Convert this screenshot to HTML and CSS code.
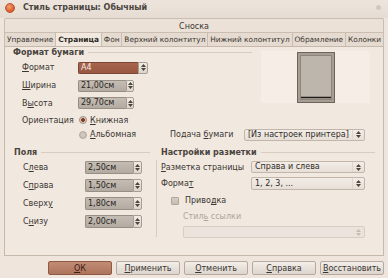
FILE: index.html
```html
<!DOCTYPE html>
<html lang="ru">
<head>
<meta charset="utf-8">
<link rel="stylesheet" href="styles.css">
</head>
<body>
<div class="win">
  <div class="titlebar">
    <span class="close"></span>
    <span class="title">Стиль страницы: Обычный</span>
    <span class="dot"></span>
  </div>
  <div class="notebook">
    <div class="tabs1"><span>Сноска</span></div>
    <div class="tabs2">
      <span class="tab">Управление</span>
      <span class="tab active">Страница</span>
      <span class="tab">Фон</span>
      <span class="tab">Верхний колонтитул</span>
      <span class="tab">Нижний колонтитул</span>
      <span class="tab">Обрамление</span>
      <span class="tab">Колонки</span>
    </div>
    <div class="page">
      <div class="top">
        <div class="paper">
          <div class="hdr"><span>Формат бумаги</span><i class="rule"></i></div>
          <div class="row h19"><span class="lbl"><u>Ф</u>ормат</span>
            <div class="field w70"><span class="val sel">A4</span><span class="spin"><svg width="5" height="7" viewBox="0 0 5 7"><path d="M0 3L2.5 0L5 3Z M0 4L2.5 7L5 4Z"/></svg></span></div>
          </div>
          <div class="row h17"><span class="lbl"><u>Ш</u>ирина</span>
            <div class="field w56"><span class="val">21,00см</span><span class="spin"><svg width="5" height="7" viewBox="0 0 5 7"><path d="M0 3L2.5 0L5 3Z M0 4L2.5 7L5 4Z"/></svg></span></div>
          </div>
          <div class="row h18"><span class="lbl">В<u>ы</u>сота</span>
            <div class="field w56"><span class="val">29,70см</span><span class="spin"><svg width="5" height="7" viewBox="0 0 5 7"><path d="M0 3L2.5 0L5 3Z M0 4L2.5 7L5 4Z"/></svg></span></div>
          </div>
        </div>
        <div class="preview">
          <svg width="38" height="51" viewBox="0 0 38 51">
            <rect x="0.5" y="0.5" width="37" height="50" fill="#a69e93" stroke="#6c655c"/>
            <rect x="3.5" y="3.5" width="31" height="44" fill="#bdb6ac" stroke="#8d857b"/>
            <line x1="4" y1="45.5" x2="34" y2="45.5" stroke="#1e1b18" stroke-width="1.5"/>
          </svg>
        </div>
      </div>
      <div class="orow o1">
        <span class="lbl">Ориентация</span>
        <span class="radio on"></span><span class="rtext"><u>К</u>нижная</span>
      </div>
      <div class="orow o2">
        <span class="lbl"></span>
        <span class="radio"></span><span class="rtext wide"><u>А</u>льбомная</span>
        <span class="lbl2">Подача <u>б</u>умаги</span>
        <div class="select w121"><span class="stext">[Из настроек принтера]</span><span class="sarrow"><svg width="5" height="7" viewBox="0 0 5 7"><path d="M0 3L2.5 0L5 3Z M0 4L2.5 7L5 4Z"/></svg></span></div>
      </div>
      <div class="bottom">
        <div class="margins">
          <div class="hdr"><span>Поля</span><i class="rule"></i></div>
          <div class="mrow"><span class="mlbl">С<u>л</u>ева</span>
            <div class="field w57"><span class="val">2,50см</span><span class="spin s9"><svg width="5" height="7" viewBox="0 0 5 7"><path d="M0 3L2.5 0L5 3Z M0 4L2.5 7L5 4Z"/></svg></span></div></div>
          <div class="mrow"><span class="mlbl">С<u>п</u>рава</span>
            <div class="field w57"><span class="val">1,50см</span><span class="spin s9"><svg width="5" height="7" viewBox="0 0 5 7"><path d="M0 3L2.5 0L5 3Z M0 4L2.5 7L5 4Z"/></svg></span></div></div>
          <div class="mrow"><span class="mlbl">Сверх<u>у</u></span>
            <div class="field w57"><span class="val">1,80см</span><span class="spin s9"><svg width="5" height="7" viewBox="0 0 5 7"><path d="M0 3L2.5 0L5 3Z M0 4L2.5 7L5 4Z"/></svg></span></div></div>
          <div class="mrow"><span class="mlbl">С<u>н</u>изу</span>
            <div class="field w57"><span class="val">2,00см</span><span class="spin s9"><svg width="5" height="7" viewBox="0 0 5 7"><path d="M0 3L2.5 0L5 3Z M0 4L2.5 7L5 4Z"/></svg></span></div></div>
        </div>
        <i class="vsep"></i>
        <div class="layout">
          <div class="hdr"><span>Настройки разметки</span><i class="rule"></i></div>
          <div class="lrow r18"><span class="llbl"><u>Р</u>азметка страницы</span>
            <div class="select w114"><span class="stext">Справа и слева</span><span class="sarrow"><svg width="5" height="7" viewBox="0 0 5 7"><path d="M0 3L2.5 0L5 3Z M0 4L2.5 7L5 4Z"/></svg></span></div></div>
          <div class="lrow r14"><span class="llbl">Форма<u>т</u></span>
            <div class="select w114 h13"><span class="stext">1, 2, 3, ...</span><span class="sarrow"><svg width="5" height="7" viewBox="0 0 5 7"><path d="M0 3L2.5 0L5 3Z M0 4L2.5 7L5 4Z"/></svg></span></div></div>
          <div class="crow"><span class="check"></span><span>Приво<u>д</u>ка</span></div>
          <div class="dlbl">Стил<u>ь</u> ссылки</div>
          <div class="select dis"><span class="stext"></span><span class="sarrow"><svg width="5" height="7" viewBox="0 0 5 7"><path d="M0 3L2.5 0L5 3Z M0 4L2.5 7L5 4Z"/></svg></span></div>
        </div>
      </div>
    </div>
  </div>
  <div class="buttons">
    <span class="btn ok"><u>О</u>К</span>
    <span class="btn"><u>П</u>рименить</span>
    <span class="btn"><u>О</u>тменить</span>
    <span class="btn"><u>С</u>правка</span>
    <span class="btn"><u>В</u>осстановить</span>
  </div>
</div>
</body>
</html>
```

FILE: styles.css
```css
* { box-sizing: border-box; }
html, body { margin: 0; padding: 0; }
body {
  width: 388px; height: 278px; overflow: hidden;
  background: #efe5dc;
  font-family: "DejaVu Sans", sans-serif;
  font-size: 8px;
  color: #3a3632;
}
u { text-decoration: underline; text-underline-offset: 1px; }
.win { width: 388px; height: 278px; display: flex; flex-direction: column; }

.titlebar {
  height: 18px; display: flex; align-items: center;
  padding-left: 5px; padding-right: 7px;
  background: linear-gradient(#ede5dd, #e6dcd2);
}
.close {
  width: 10px; height: 10px; border-radius: 50%;
  background: radial-gradient(circle at 40% 35%, #f5a07a, #e0622f 60%, #c24d22);
  border: 1px solid #b9542c;
  margin-top: -3px;
}
.title { margin-left: 8px; font-weight: bold; color: #4a443e; font-size: 8px; margin-top: -4px; }
.dot { margin-left: auto; width: 5px; height: 5px; border-radius: 50%; background: #d2c9c0; margin-top: -4px; }

.notebook { margin: 0 4px; display: flex; flex-direction: column; }
.tabs1 {
  height: 14px; border: 1px solid #cbbeb1; border-bottom: none;
  background: #ebe1d7; display: flex; justify-content: center; align-items: center;
  padding-top: 1px; border-radius: 2px 2px 0 0;
}
.tabs2 { height: 14px; display: flex; font-size: 7.4px; }
.tab {
  flex: 1 1 auto; text-align: center; padding: 2px 0 0;
  background: #e6dbd0; border: 1px solid #cbbeb1; border-bottom: none; border-left: none;
  line-height: 10px; white-space: nowrap;
}
.tab:first-child { border-left: 1px solid #cbbeb1; }
.tab.active { background: #f1e8df; font-weight: bold; color: #2e2a26; }

.page {
  height: 210px; border: 1px solid #c6b8ab; background: #f1e8df;
  display: flex; flex-direction: column;
}
.hdr { height: 11px; display: flex; align-items: center; font-weight: bold; color: #4a443e; }
.rule { flex: 1; height: 1px; background: #d9cdc1; margin-left: 4px; }

.top { display: flex; padding-left: 8px; }
.paper { width: 239px; display: flex; flex-direction: column; }
.row { display: flex; align-items: center; padding-left: 9px; }
.h19 { height: 19px; } .h17 { height: 17px; } .h18 { height: 18px; }
.lbl { width: 56px; flex: none; }

.field { display: flex; height: 12px; flex: none; }
.w70 { width: 70px; } .w56 { width: 56px; } .w57 { width: 57px; height: 13px; }
.val {
  flex: 1; background: linear-gradient(#c5bdb3, #b3aba1);
  border: 1px solid #978e84; border-right: none;
  padding-left: 2px; line-height: 10px; color: #2a2724; border-radius: 2px 0 0 2px;
}
.w57 .val { line-height: 11px; }
.val.sel { background: linear-gradient(#a8644c, #985741); border-color: #7e4634; color: #f6eee8; }
.spin {
  width: 10px; flex: none; background: linear-gradient(#f1ebe5, #ddd4cb);
  border: 1px solid #a79d93; border-radius: 0 2px 2px 0;
  display: flex; align-items: center; justify-content: center;
}
.w56 .spin { width: 8px; }
.s9 { width: 9px; }
.spin svg, .sarrow svg { fill: #4c4640; display: block; }

.preview {
  margin: 4px 0 0 9px; width: 109px; height: 52px; background: #f5ede6;
  display: flex; justify-content: center; align-items: flex-end;
}

.orow { display: flex; align-items: center; padding-left: 17px; }
.o1 { height: 16px; }
.o2 { height: 13px; }
.radio {
  width: 8px; height: 8px; border-radius: 50%; margin-left: 1px; flex: none;
  background: radial-gradient(#d5ccc3, #c2b8ae); border: 1px solid #b3a89e;
}
.radio.on { background: radial-gradient(circle, #8a3c22 0 1.6px, #d9cfc6 2.2px); border-color: #9b8f84; }
.rtext { margin-left: 3px; }
.rtext.wide { width: 80px; }
.lbl2 { width: 74px; flex: none; }

.select {
  display: flex; height: 12px; border: 1px solid #c2b6aa; border-radius: 2px;
  background: linear-gradient(#f3ede7, #e7dfd7); flex: none;
}
.w121 { width: 121px; } .w114 { width: 114px; }
.h13 { height: 13px; }
.stext { flex: 1; padding-left: 3px; line-height: 10px; white-space: nowrap; color: #2f2b27; }
.h13 .stext { line-height: 11px; }
.sarrow { width: 12px; display: flex; align-items: center; justify-content: center; border-left: 1px solid #e0d6cc; }

.bottom { display: flex; padding-top: 6px; }
.margins { margin-left: 9px; width: 136px; display: flex; flex-direction: column; }
.mrow { height: 18px; display: flex; align-items: center; padding-left: 9px; }
.mlbl { width: 62px; flex: none; }
.vsep { width: 1px; height: 77px; background: #d8ccc0; margin: 13px 0 0 6px; flex: none; }
.layout { margin-left: 4px; width: 214px; display: flex; flex-direction: column; }
.lrow { display: flex; align-items: center; }
.r18 { height: 18px; } .r14 { height: 15px; }
.llbl { width: 90px; flex: none; }
.crow { height: 19px; display: flex; align-items: center; padding-left: 10px; }
.check {
  width: 8px; height: 8px; border: 1px solid #b1a69c; background: linear-gradient(#d6cdc4, #c6bcb2);
  margin-right: 6px; border-radius: 1px;
}
.dlbl { height: 14px; line-height: 14px; padding-left: 22px; color: #aea59c; }
.select.dis { margin: 2px 0 0 22px; width: 182px; height: 12px; background: #ebe3dc; border-color: #d8cdc2; }
.select.dis svg { fill: #c6bcb2; }
.select.dis .sarrow { border-left-color: #ebe3dc; }

.buttons { display: flex; justify-content: flex-end; gap: 4px; padding: 5px 4px 0 0; }
.btn {
  width: 64px; height: 14px; display: flex; align-items: center; justify-content: center;
  border: 1px solid #b4aaa0; border-radius: 2px;
  background: linear-gradient(#f3eee9, #ddd5cd); color: #3a3632;
}
.btn.ok { background: linear-gradient(#c28c74, #ad735b); border-color: #8e5a44; color: #3a2218; }
```
